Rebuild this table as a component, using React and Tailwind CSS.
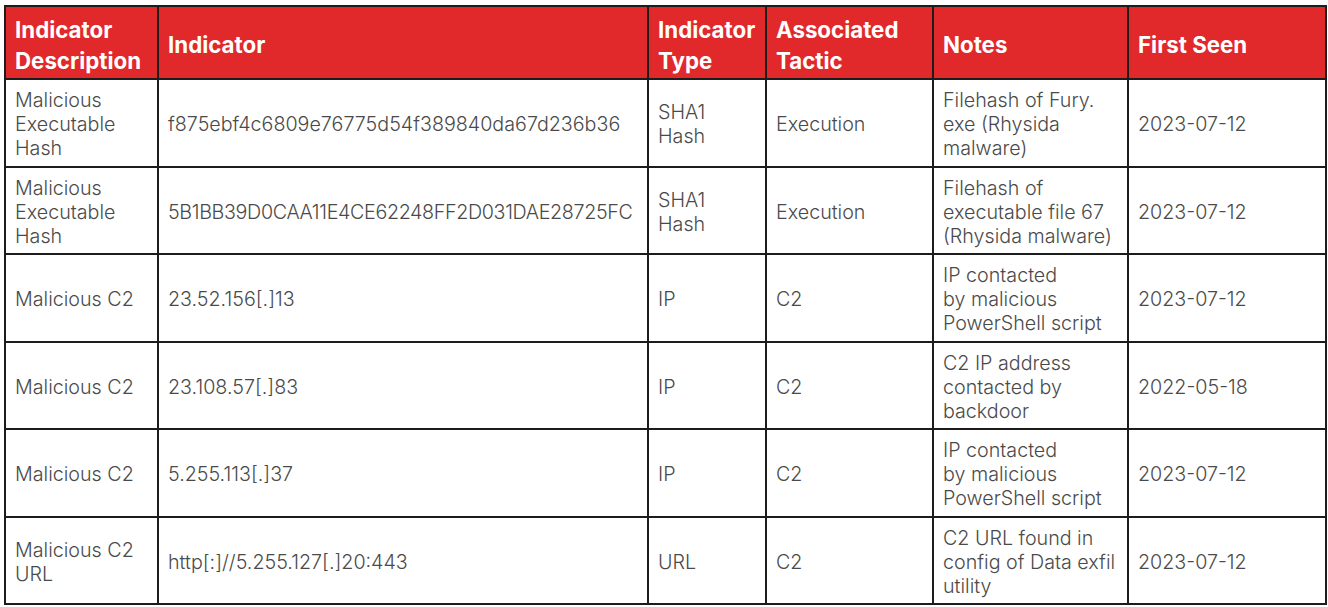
import React from "react";

const headers = [
    ["Indicator", "Description"],
    ["Indicator"],
    ["Indicator", "Type"],
    ["Associated", "Tactic"],
    ["Notes"],
    ["First Seen"],
];

const rows = [
    [["Malicious", "Executable", "Hash"], ["f875ebf4c6809e76775d54f389840da67d236b36"], ["SHA1", "Hash"], ["Execution"], ["Filehash of Fury.", "exe (Rhysida", "malware)"], ["2023-07-12"]],
    [["Malicious", "Executable", "Hash"], ["5B1BB39D0CAA11E4CE62248FF2D031DAE28725FC"], ["SHA1", "Hash"], ["Execution"], ["Filehash of", "executable file 67", "(Rhysida malware)"], ["2023-07-12"]],
    [["Malicious C2"], ["23.52.156[.]13"], ["IP"], ["C2"], ["IP contacted", "by malicious", "PowerShell script"], ["2023-07-12"]],
    [["Malicious C2"], ["23.108.57[.]83"], ["IP"], ["C2"], ["C2 IP address", "contacted by", "backdoor"], ["2022-05-18"]],
    [["Malicious C2"], ["5.255.113[.]37"], ["IP"], ["C2"], ["IP contacted", "by malicious", "PowerShell script"], ["2023-07-12"]],
    [["Malicious C2", "URL"], ["http[:]//5.255.127[.]20:443"], ["URL"], ["C2"], ["C2 URL found in", "config of Data exfil", "utility"], ["2023-07-12"]],
];

const widths = ["w-[153px]", "w-[490px]", "w-[118px]", "w-[167px]", "w-[195px]", "w-[198px]"];

const Lines = ({ lines }) => (
    <>
        {lines.map((l, i) => (
            <React.Fragment key={i}>
                {i > 0 && <br />}
                {l}
            </React.Fragment>
        ))}
    </>
);

const App = () => {
    return (
        <div className="min-h-[607px] bg-white pl-[4px] pt-[5px] font-['Inter','Liberation_Sans',sans-serif]">
            <table className="table-fixed border-collapse w-[1321px]">
                <colgroup>
                    {widths.map((w, i) => (
                        <col key={i} className={w} />
                    ))}
                </colgroup>
                <thead>
                    <tr className="h-[73px] bg-[#e1282b]">
                        {headers.map((h, i) => (
                            <th
                                key={i}
                                className="border-2 border-[#1c1c1c] pl-[9px] pr-[4px] pt-[4px] text-left align-middle text-[22.3px] leading-[31px] font-bold text-white whitespace-nowrap"
                            >
                                <Lines lines={h} />
                            </th>
                        ))}
                    </tr>
                </thead>
                <tbody>
                    {rows.map((row, r) => (
                        <tr key={r} className="h-[87.5px]">
                            {row.map((cell, c) => (
                                <td
                                    key={c}
                                    className={
                                        "border-2 border-[#1c1c1c] pl-[9px] pr-[4px] pt-[3px] align-middle text-[19.7px] leading-[24px] font-light text-[#4a4a4a] whitespace-nowrap" +
                                        (r === 1 && c === 1 ? " tracking-[-0.35px]" : "")
                                    }
                                >
                                    <Lines lines={cell} />
                                </td>
                            ))}
                        </tr>
                    ))}
                </tbody>
            </table>
        </div>
    );
};

export default App;
